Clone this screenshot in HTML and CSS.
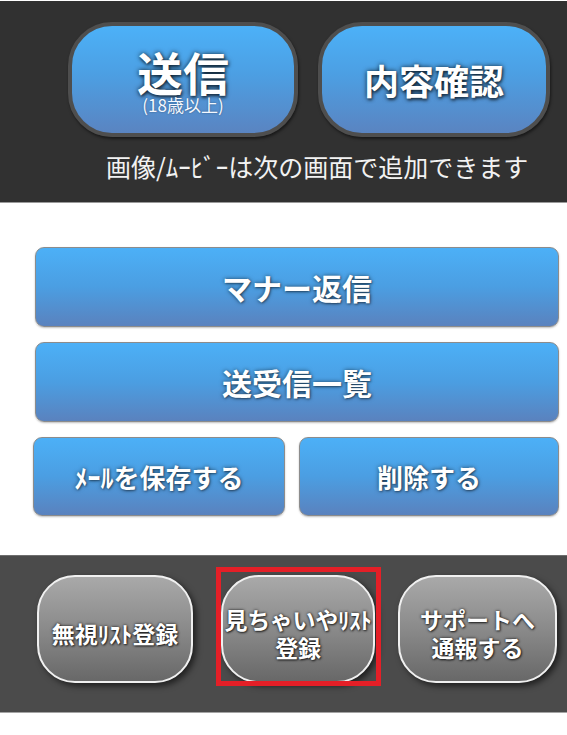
FILE: index.html
```html
<!DOCTYPE html>
<html lang="ja">
<head>
<meta charset="utf-8">
<title>メール</title>
<link rel="stylesheet" href="styles.css">
</head>
<body>
<section class="top">
  <div class="top-row">
    <div class="big-btn send">
      <span class="send-main">送信</span>
      <span class="send-sub">(18歳以上)</span>
    </div>
    <div class="big-btn confirm">
      <span class="confirm-label">内容確認</span>
    </div>
  </div>
  <p class="caption">画像/ﾑｰﾋﾞｰは次の画面で追加できます</p>
</section>

<section class="mid">
  <div class="blue-btn">マナー返信</div>
  <div class="blue-btn">送受信一覧</div>
  <div class="blue-row">
    <div class="blue-btn small">ﾒｰﾙを保存する</div>
    <div class="blue-btn small">削除する</div>
  </div>
</section>

<section class="bottom">
  <div class="gray-btn ignore"><span class="line">無視ﾘｽﾄ登録</span></div>
  <div class="highlight">
    <div class="gray-btn mine"><span class="line">見ちゃいやﾘｽﾄ</span><span class="line">登録</span></div>
  </div>
  <div class="gray-btn support"><span class="line">サポートへ</span><span class="line">通報する</span></div>
</section>
</body>
</html>
```

FILE: styles.css
```css
html, body {
  margin: 0;
  padding: 0;
  background: #ffffff;
}

body {
  width: 567px;
  height: 735px;
  overflow: hidden;
  font-family: "Noto Sans CJK JP", "Noto Sans", sans-serif;
}

/* ---------- top dark panel ---------- */
.top {
  margin-top: 1px;
  height: 202px;
  box-sizing: border-box;
  background: #313131;
  border-bottom: 1px solid #9a9a9a;
  padding-top: 21px;
}

.top-row {
  display: flex;
  gap: 20px;
  padding-left: 68px;
}

.big-btn {
  height: 115px;
  box-sizing: border-box;
  border: 4px solid #4e4e4e;
  border-radius: 44px;
  background: linear-gradient(#4cb1f8 0%, #4c9fe3 45%, #5a84c1 100%);
  box-shadow: 1px 2px 3px rgba(0, 0, 0, 0.5);
  display: flex;
  flex-direction: column;
  align-items: center;
  justify-content: center;
  color: #ffffff;
}

.send {
  width: 230px;
  padding-top: 2px;
}

.confirm {
  width: 232px;
}

.send-main {
  display: block;
  font-size: 46px;
  line-height: 46px;
  font-weight: 700;
  text-shadow: 0 0 5px rgba(0, 0, 0, 0.75), 1px 2px 3px rgba(0, 0, 0, 0.5);
}

.send-sub {
  display: block;
  font-size: 17px;
  line-height: 18px;
  margin-top: 2px;
  font-weight: 400;
  color: #f4f8ff;
  text-shadow: 0 0 2px rgba(0, 0, 0, 0.4);
}

.confirm-label {
  font-size: 35px;
  line-height: 40px;
  font-weight: 700;
  text-shadow: 0 0 5px rgba(0, 0, 0, 0.75), 1px 2px 3px rgba(0, 0, 0, 0.5);
}

.caption {
  margin: 16px 0 0 0;
  padding-left: 106px;
  font-size: 25px;
  line-height: 26px;
  color: #f2f2f2;
  white-space: nowrap;
}

/* ---------- middle white area ---------- */
.mid {
  height: 352px;
  box-sizing: border-box;
  padding: 44px 8px 0 35px;
  display: flex;
  flex-direction: column;
  gap: 15px;
}

.blue-btn {
  height: 80px;
  box-sizing: border-box;
  border: 1.5px solid #8c8c8c;
  border-radius: 9px;
  background: linear-gradient(#4cb0f7 0%, #4b9ee2 50%, #5a82be 100%);
  box-shadow: 0 1px 2px rgba(0, 0, 0, 0.25);
  display: flex;
  align-items: center;
  justify-content: center;
  color: #ffffff;
  font-size: 30px;
  font-weight: 700;
  text-shadow: 0 0 4px rgba(0, 0, 0, 0.55), 1px 1px 2px rgba(0, 0, 0, 0.35);
}

.blue-row {
  display: grid;
  grid-template-columns: 252px 1fr;
  column-gap: 14px;
  margin-left: -2px;
}

.blue-btn.small {
  height: 79px;
  font-size: 26px;
}

/* ---------- bottom dark panel ---------- */
.bottom {
  height: 158px;
  box-sizing: border-box;
  background: #4b4b4b;
  border-top: 1px solid #6e6e6e;
  border-bottom: 1px solid #a4a4a4;
  padding: 19px 0 0 37px;
  display: flex;
  align-items: flex-start;
}

.gray-btn {
  height: 108px;
  box-sizing: border-box;
  border: 2px solid #f0f0f0;
  border-radius: 38px;
  background: linear-gradient(#a9a9a9 0%, #8a8a8a 50%, #686868 100%);
  box-shadow: 3px 3px 6px rgba(0, 0, 0, 0.6);
  display: flex;
  flex-direction: column;
  align-items: center;
  justify-content: center;
  text-align: center;
  padding-top: 8px;
  color: #ffffff;
  font-size: 23px;
  font-weight: 700;
  white-space: nowrap;
  text-shadow: 0 0 3px rgba(0, 0, 0, 0.85), 1px 1px 2px rgba(0, 0, 0, 0.6);
}

.line {
  display: block;
  line-height: 28px;
}

.ignore {
  width: 156px;
}

.highlight {
  position: relative;
  margin-left: 28px;
  width: 154px;
}

.highlight::after {
  content: "";
  position: absolute;
  left: -5px;
  top: -8px;
  right: -6px;
  bottom: -3px;
  border: 5px solid #e41f27;
  pointer-events: none;
}

.mine {
  width: 154px;
  letter-spacing: -0.3px;
}

.support {
  width: 159px;
  margin-left: 23px;
}
```
